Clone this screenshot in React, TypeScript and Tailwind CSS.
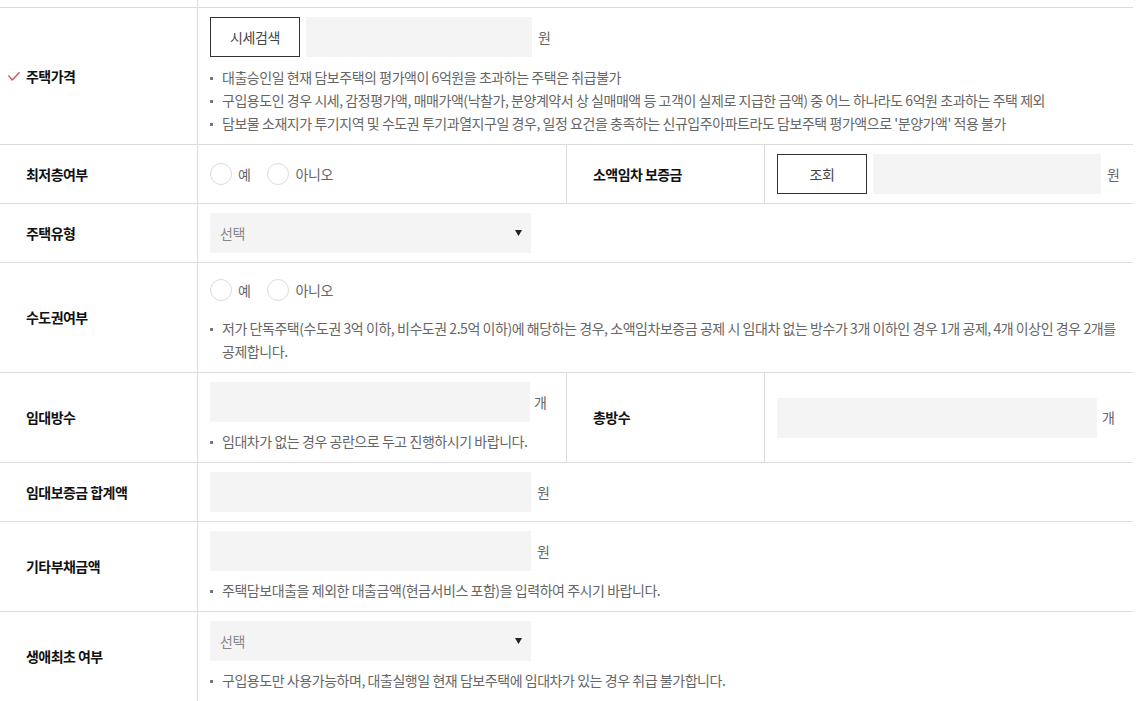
import React from 'react';

const font = "font-['Noto_Sans_CJK_KR','Noto_Sans',sans-serif]";

const CheckMark: React.FC = () => (
  <svg className="w-[12px] h-[9px] shrink-0" viewBox="0 0 12 9" fill="none">
    <polyline points="0.8,3.8 4.2,8 11.2,0.8" stroke="#d9475d" strokeWidth="1.3" strokeLinecap="round" strokeLinejoin="round" />
  </svg>
);

const Label: React.FC<{ children: React.ReactNode; checked?: boolean }> = ({ children, checked }) => (
  <div
    className={`w-[198px] shrink-0 border-r border-[#dcdcdc] flex items-center ${checked ? 'pl-[8px] gap-[6px]' : 'pl-[26px]'} text-[14px] font-bold text-[#111] tracking-[-0.55px]`}
  >
    {checked && <CheckMark />}
    <span>{children}</span>
  </div>
);

const Notes: React.FC<{ items: string[]; className?: string }> = ({ items, className = 'mt-2' }) => (
  <ul className={`${className} text-[14px] leading-[23px] text-[#666] tracking-[-0.45px] break-keep`}>
    {items.map((t, i) => (
      <li key={i} className="flex">
        <span className="w-[3px] h-[3px] bg-[#777] mt-[11px] mr-[9px] shrink-0" />
        <span className="flex-1">{t}</span>
      </li>
    ))}
  </ul>
);

const Field: React.FC<{ w: string }> = ({ w }) => <div className={`${w} h-10 bg-[#f4f4f4] shrink-0`} />;

const Unit: React.FC<{ children: React.ReactNode }> = ({ children }) => (
  <span className="text-[14px] text-[#666]">{children}</span>
);

const Btn: React.FC<{ children: React.ReactNode }> = ({ children }) => (
  <button className="w-[90px] h-10 border border-[#333] bg-white text-[14px] text-[#444] tracking-[-0.4px] shrink-0">
    {children}
  </button>
);

const Radio: React.FC<{ label: string }> = ({ label }) => (
  <label className="flex items-center gap-[6px]">
    <span className="w-[22px] h-[22px] rounded-full border border-[#dcdcdc] bg-white" />
    <span className="text-[14px] text-[#666] tracking-[-0.4px]">{label}</span>
  </label>
);

const RadioGroup: React.FC<{ h?: string }> = ({ h = 'h-10' }) => (
  <div className={`${h} flex items-center gap-[17px]`}>
    <Radio label="예" />
    <Radio label="아니오" />
  </div>
);

const SelectBox: React.FC = () => (
  <div className="w-[321px] h-10 bg-[#f4f4f4] flex items-center justify-between pl-[10px] pr-[9px]">
    <span className="text-[14px] text-[#888] tracking-[-0.4px]">선택</span>
    <svg className="w-[7px] h-[6px]" viewBox="0 0 7 6">
      <polygon points="0,0 7,0 3.5,6" fill="#222" />
    </svg>
  </div>
);

const Row: React.FC<{ children: React.ReactNode }> = ({ children }) => (
  <div className="flex border-b border-[#dcdcdc]">{children}</div>
);

export default function App() {
  return (
    <div className={`w-[1142px] h-[701px] overflow-hidden bg-white ${font}`}>
      <div className="w-[1133px]">
        {/* tail of previous row */}
        <Row>
          <div className="w-[198px] h-[7px] border-r border-[#dcdcdc]" />
          <div className="flex-1" />
        </Row>

        <Row>
          <Label checked>주택가격</Label>
          <div className="flex-1 pl-3 py-[9px]">
            <div className="flex items-center gap-[6px]">
              <Btn>시세검색</Btn>
              <Field w="w-[226px]" />
              <Unit>원</Unit>
            </div>
            <Notes
              className="mt-[9px]"
              items={[
                '대출승인일 현재 담보주택의 평가액이 6억원을 초과하는 주택은 취급불가',
                '구입용도인 경우 시세, 감정평가액, 매매가액(낙찰가, 분양계약서 상 실매매액 등 고객이 실제로 지급한 금액) 중 어느 하나라도 6억원 초과하는 주택 제외',
                "담보물 소재지가 투기지역 및 수도권 투기과열지구일 경우, 일정 요건을 충족하는 신규입주아파트라도 담보주택 평가액으로 '분양가액' 적용 불가",
              ]}
            />
          </div>
        </Row>

        <Row>
          <Label>최저층여부</Label>
          <div className="w-[369px] shrink-0 border-r border-[#dcdcdc] pl-3 py-[9px]">
            <RadioGroup />
          </div>
          <Label>소액임차 보증금</Label>
          <div className="flex-1 pl-3 py-[9px] flex items-center gap-[6px]">
            <Btn>조회</Btn>
            <Field w="w-[228px]" />
            <Unit>원</Unit>
          </div>
        </Row>

        <Row>
          <Label>주택유형</Label>
          <div className="flex-1 pl-3 py-[9px]">
            <SelectBox />
          </div>
        </Row>

        <Row>
          <Label>수도권여부</Label>
          <div className="flex-1 pl-3 py-[9px]">
            <RadioGroup h="h-9" />
            <Notes
              className="mt-[9px]"
              items={[
                '저가 단독주택(수도권 3억 이하, 비수도권 2.5억 이하)에 해당하는 경우, 소액임차보증금 공제 시 임대차 없는 방수가 3개 이하인 경우 1개 공제, 4개 이상인 경우 2개를 공제합니다.',
              ]}
            />
          </div>
        </Row>

        <Row>
          <Label>임대방수</Label>
          <div className="w-[369px] shrink-0 border-r border-[#dcdcdc] pl-3 py-[9px]">
            <div className="flex items-center gap-[4px]">
              <Field w="w-[320px]" />
              <Unit>개</Unit>
            </div>
            <Notes items={['임대차가 없는 경우 공란으로 두고 진행하시기 바랍니다.']} />
          </div>
          <Label>총방수</Label>
          <div className="flex-1 pl-3 flex items-center gap-[5px]">
            <Field w="w-[320px]" />
            <Unit>개</Unit>
          </div>
        </Row>

        <Row>
          <Label>임대보증금 합계액</Label>
          <div className="flex-1 pl-3 py-[9px] flex items-center gap-[6px]">
            <Field w="w-[321px]" />
            <Unit>원</Unit>
          </div>
        </Row>

        <Row>
          <Label>기타부채금액</Label>
          <div className="flex-1 pl-3 py-[9px]">
            <div className="flex items-center gap-[6px]">
              <Field w="w-[321px]" />
              <Unit>원</Unit>
            </div>
            <Notes items={['주택담보대출을 제외한 대출금액(현금서비스 포함)을 입력하여 주시기 바랍니다.']} />
          </div>
        </Row>

        <Row>
          <Label>생애최초 여부</Label>
          <div className="flex-1 pl-3 py-[9px]">
            <SelectBox />
            <Notes items={['구입용도만 사용가능하며, 대출실행일 현재 담보주택에 임대차가 있는 경우 취급 불가합니다.']} />
          </div>
        </Row>
      </div>
    </div>
  );
}
